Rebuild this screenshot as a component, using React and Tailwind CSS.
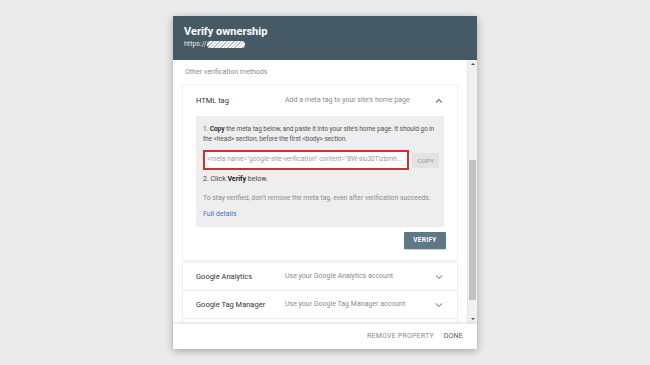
import React from "react";

const font = { fontFamily: "Roboto, 'Liberation Sans', sans-serif" };

function ChevronDown() {
  return (
    <svg width="8" height="6" viewBox="0 0 8 6" className="text-[#9e9e9e]">
      <path d="M1 1.5 L4 4.5 L7 1.5" stroke="currentColor" strokeWidth="1.1" fill="none" />
    </svg>
  );
}
function ChevronUp() {
  return (
    <svg width="8" height="6" viewBox="0 0 8 6" className="text-[#757575]">
      <path d="M1 4.5 L4 1.5 L7 4.5" stroke="currentColor" strokeWidth="1.1" fill="none" />
    </svg>
  );
}

export default function App() {
  return (
    <div className="w-[650px] h-[365px] bg-[#ebebeb] flex items-center justify-center" style={font}>
      <div className="w-[304px] h-[333px] bg-white flex flex-col shadow-[0_2px_8px_rgba(0,0,0,0.3)]">
        {/* header */}
        <div className="h-[44px] bg-[#465a65] flex flex-col justify-center px-[11px] pb-[2px] shrink-0">
          <div className="text-white text-[11px] font-bold leading-[13px]">Verify ownership</div>
          <div className="flex items-center mt-[2px]">
            <span className="text-[#e0e6e9] text-[7px] leading-[9px]">https://</span>
            <span className="w-[38px] h-[7px] rounded-full bg-[repeating-linear-gradient(135deg,#ffffff_0px,#ffffff_1.5px,#b8c2c7_1.5px,#b8c2c7_2.5px)]" />
          </div>
        </div>
        {/* body */}
        <div className="flex flex-1 min-h-0">
          <div className="flex-1 overflow-hidden pl-[10px] pr-[10px]">
            <div className="h-[25px] flex items-center pl-[2px] text-[7px] text-[#8a8a8a]">Other verification methods</div>
            {/* HTML tag card */}
            <div className="bg-white shadow-[0_0_2px_rgba(0,0,0,0.2)] rounded-[1px]">
              <div className="h-[31px] flex items-center pl-[13px] pr-[14px]">
                <span className="w-[89px] text-[7.5px] text-[#333]">HTML tag</span>
                <span className="flex-1 text-[7px] text-[#8a8a8a]">Add a meta tag to your site's home page</span>
                <ChevronUp />
              </div>
              <div className="mx-[13px] bg-[#eeeeee] pt-[8px] pb-[8px] pl-[7px] pr-[5px]">
                <p className="text-[6.6px] leading-[10px] text-[#555] tracking-[-0.1px]">
                  <span>1. </span><b className="text-[#333]">Copy</b><span> the meta tag below, and paste it into your site's home page. It should go in the &lt;head&gt; section, before the first &lt;body&gt; section.</span>
                </p>
                <div className="flex items-center mt-[6px]">
                  <div className="w-[210px] h-[20px] border-2 border-[#d32f2f] bg-white flex items-center pl-[2px] overflow-hidden">
                    <span className="text-[6.6px] text-[#9a9a9a] whitespace-nowrap">&lt;meta name="google-site-verification" content="BW-slu30Tlzbmh...</span>
                  </div>
                  <div className="ml-[3px] w-[27px] h-[15px] bg-[#e2e2e2] flex items-center justify-center text-[6px] text-[#8c8c8c] tracking-[0.3px]">COPY</div>
                </div>
                <p className="mt-[4px] text-[7px] text-[#444]">2. Click <b className="text-[#222]">Verify</b> below.</p>
                <p className="mt-[8px] text-[6.8px] text-[#8c8c8c]">To stay verified, don't remove the meta tag, even after verification succeeds.</p>
                <p className="mt-[6px] text-[7px] text-[#3f6fd8]">Full details</p>
              </div>
              <div className="flex justify-end mx-[11px] pt-[5px] pb-[11px]">
                <div className="w-[42px] h-[17px] bg-[#5e7885] rounded-[1px] flex items-center justify-center text-white text-[6.5px] font-bold tracking-[0.3px] shadow-[0_1px_1px_rgba(0,0,0,0.2)]">VERIFY</div>
              </div>
            </div>
            {/* collapsed rows */}
            <div className="bg-white shadow-[0_0_2px_rgba(0,0,0,0.2)] mt-[3px]">
              <div className="h-[28px] mt-[3px] flex items-center pl-[13px] pr-[14px] border-b border-[#eeeeee]">
                <span className="w-[89px] text-[7.5px] text-[#333]">Google Analytics</span>
                <span className="flex-1 text-[7px] text-[#8a8a8a]">Use your Google Analytics account</span>
                <ChevronDown />
              </div>
              <div className="h-[28px] flex items-center pl-[13px] pr-[14px] border-b border-[#eeeeee]">
                <span className="w-[89px] text-[7.5px] text-[#333]">Google Tag Manager</span>
                <span className="flex-1 text-[7px] text-[#8a8a8a]">Use your Google Tag Manager account</span>
                <ChevronDown />
              </div>
              <div className="h-[28px]" />
            </div>
          </div>
          {/* scrollbar */}
          <div className="w-[10px] bg-[#f1f1f1] flex flex-col items-center border-l border-[#e6e6e6]">
            <div className="h-[8px] flex items-center justify-center">
              <div className="w-0 h-0 border-l-[2px] border-r-[2px] border-b-[2px] border-l-transparent border-r-transparent border-b-[#505050]" />
            </div>
            <div className="mt-[92px] w-[7px] h-[140px] bg-[#c1c1c1]" />
            <div className="flex-1" />
            <div className="h-[8px] flex items-center justify-center">
              <div className="w-0 h-0 border-l-[2px] border-r-[2px] border-t-[2px] border-l-transparent border-r-transparent border-t-[#505050]" />
            </div>
          </div>
        </div>
        {/* footer */}
        <div className="h-[26px] shrink-0 flex items-center justify-end pr-[14px] shadow-[0_-1px_2px_rgba(0,0,0,0.08)] border-t border-[#e8e8e8]">
          <span className="text-[7px] text-[#8a8a8a] tracking-[0.2px]">REMOVE PROPERTY</span>
          <span className="ml-[10px] text-[7px] text-[#555] tracking-[0.2px]">DONE</span>
        </div>
      </div>
    </div>
  );
}
